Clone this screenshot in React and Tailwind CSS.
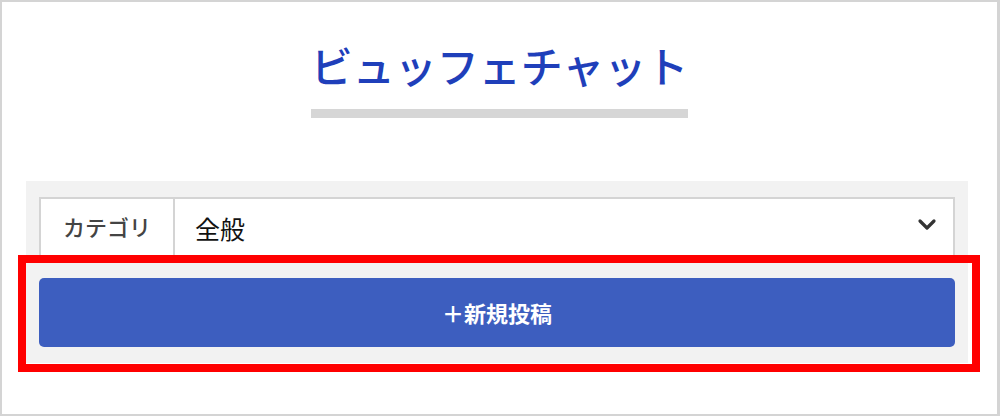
import React from "react";

export default function App() {
  const font = { fontFamily: '"Noto Sans CJK JP", "Noto Sans", sans-serif' };
  return (
    <div className="relative w-[1000px] h-[416px] bg-white border-2 border-r-[3px] border-[#d4d4d4] overflow-hidden" style={font}>
      <div className="flex flex-col items-center pt-[37px]">
        <div className="flex flex-col items-stretch">
          <div className="text-[42px] leading-[52px] text-[#1f3fba] font-medium">ビュッフェチャット</div>
          <div className="mt-[18px] h-[9px] bg-[#d6d6d6]"></div>
        </div>
      </div>
      <div className="ml-[24px] mt-[63px] w-[942px] bg-[#f2f2f2] px-[13px] pt-[16px] pb-[16px] flex flex-col gap-[16px]">
        <div className="flex h-[65px] bg-white border-2 border-[#d4d4d4]">
          <div className="w-[134px] flex items-center justify-center border-r-2 border-[#d4d4d4] text-[22px] font-medium text-[#444] pb-[6px]">カテゴリ</div>
          <div className="flex-1 flex items-center pl-[20px] pr-[16px] pb-[2px]">
            <span className="text-[25px] text-[#111]">全般</span>
            <svg className="ml-auto mb-[8px]" width="20" height="14" viewBox="0 0 20 14">
              <polyline points="3,3 10,10 17,3" fill="none" stroke="#333" strokeWidth="3.2" strokeLinecap="round" strokeLinejoin="round" />
            </svg>
          </div>
        </div>
        <button className="h-[69px] w-full rounded-[5px] bg-[#3d5ebf] text-white text-[22px] font-bold flex items-center justify-center">＋新規投稿</button>
      </div>
      <div className="absolute left-[16px] top-[253px] w-[962px] h-[117px] border-[8px] border-[#ff0000]"></div>
    </div>
  );
}
